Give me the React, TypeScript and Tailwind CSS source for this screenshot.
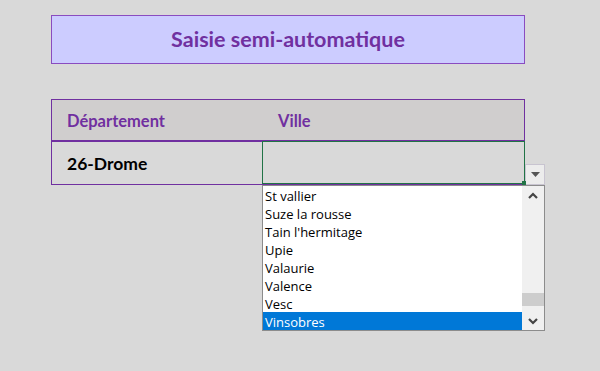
import React from "react";

const items = [
  "St vallier",
  "Suze la rousse",
  "Tain l'hermitage",
  "Upie",
  "Valaurie",
  "Valence",
  "Vesc",
  "Vinsobres",
];

export default function App() {
  return (
    <div
      className="relative w-[600px] h-[371px] bg-[#d9d9d9] overflow-hidden"
      style={{ fontFamily: "Lato, 'Open Sans', sans-serif" }}
    >
      <div className="flex flex-col pt-[15px] pl-[51px]">
        <div className="w-[474px] h-[49px] bg-[#ccccff] border border-[#8a4cc0] flex items-center justify-center">
          <span className="text-[21.5px] font-bold text-[#7030a0] leading-none">
            Saisie semi-automatique
          </span>
        </div>

        <div className="mt-[35px] w-[474px] border border-[#7030a0] flex flex-col">
          <div className="h-[42px] bg-[#d0cece] flex items-center pt-[3px] border-b-2 border-[#7030a0]">
            <div className="w-[211px] pl-[15px] text-[16.5px] font-bold text-[#7030a0]">
              Département
            </div>
            <div className="pl-[15px] text-[16.5px] font-bold text-[#7030a0]">Ville</div>
          </div>
          <div className="h-[42px] flex">
            <div className="w-[210px] pl-[15px] flex items-center pt-[2px] text-[17.5px] font-bold text-black">
              26-Drome
            </div>
            <div className="relative z-10 flex-1 border-[1.5px] border-[#217346] -mt-[1px] mr-[-1px]">
              <div className="absolute -right-[2px] -bottom-[2px] w-[4px] h-[4px] bg-[#217346]" />
            </div>
          </div>
        </div>
      </div>

      {/* dropdown button */}
      <div className="absolute left-[525px] top-[164px] w-[20px] h-[21px] bg-[#ececec] border border-[#c8c4d0] flex items-center justify-center">
        <svg width="9" height="5" viewBox="0 0 9 5">
          <path d="M0 0 H9 L4.5 5 Z" fill="#555" />
        </svg>
      </div>

      {/* dropdown list */}
      <div
        className="absolute z-20 left-[262px] top-[185px] w-[283px] h-[146px] bg-white border border-[#8c8c8c] flex"
        style={{ fontFamily: "'Open Sans', 'Noto Sans', sans-serif" }}
      >
        <div className="flex-1 flex flex-col">
          {items.map((it, i) => (
            <div
              key={it}
              className={
                "h-[18px] flex items-center pl-[2px] pt-[2px] text-[13px] leading-none " +
                (i === items.length - 1 ? "bg-[#0078d7] text-white" : "text-black")
              }
            >
              {it}
            </div>
          ))}
        </div>
        <div className="w-[22px] bg-[#f0f0f0] flex flex-col">
          <div className="h-[18px] flex items-center justify-center">
            <svg width="10" height="7" viewBox="0 0 10 7">
              <path d="M1 6 L5 2 L9 6" fill="none" stroke="#444" strokeWidth="2.2" />
            </svg>
          </div>
          <div className="flex-1 flex flex-col justify-end">
            <div className="h-[13px] bg-[#cdcdcd] mb-[6px]" />
          </div>
          <div className="h-[18px] flex items-center justify-center">
            <svg width="10" height="7" viewBox="0 0 10 7">
              <path d="M1 1 L5 5 L9 1" fill="none" stroke="#444" strokeWidth="2.2" />
            </svg>
          </div>
        </div>
      </div>
    </div>
  );
}
